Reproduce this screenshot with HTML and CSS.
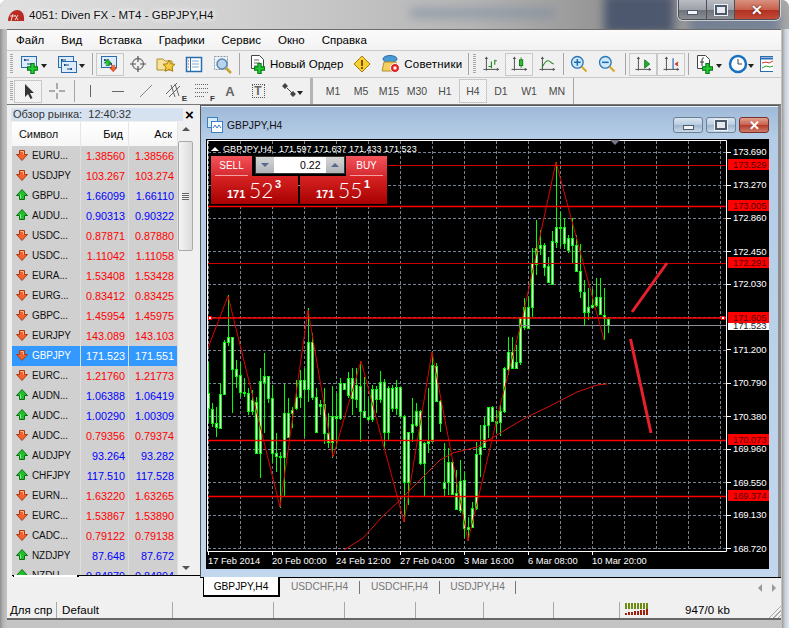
FILE: index.html
```html
<!DOCTYPE html>
<html lang="ru">
<head>
<meta charset="utf-8">
<title>4051: Diven FX - MT4 - GBPJPY,H4</title>
<link rel="stylesheet" href="styles.css">
</head>
<body>
<svg class="defs" width="0" height="0">
  <defs>
    <symbol id="plus" viewBox="0 0 10 10"><path d="M3.500 0.500h3v3h3v3h-3v3h-3v-3h-3v-3h3z" fill="#22d030" stroke="#0a7a18"/></symbol>
    <symbol id="down" viewBox="0 0 12 12"><path d="M3.500 1.500h5v4h3l-5.500 6-5.500-6h3z" fill="#f4612a" stroke="#a83a18"/><path d="M4.500 2.500h3v3" fill="none" stroke="#ffb890"/></symbol>
    <symbol id="up" viewBox="0 0 12 12"><path d="M3.500 10.500h5v-4h3l-5.500-6-5.500 6h3z" fill="#1fc02a" stroke="#0a7016"/><path d="M4.500 9.500v-4" fill="none" stroke="#9cf0a0"/></symbol>
    <symbol id="frame" viewBox="0 0 20 20"><rect x="1.500" y="2.500" width="15" height="11" fill="#dcecfb" stroke="#2a6cb0"/><path d="M4 6h5M12 10H7M4 6l1-1v2zM12 10l-1-1v2z" stroke="#1a4a80" fill="none"/></symbol>
    <symbol id="axes" viewBox="0 0 24 24"><path d="M6.500 4v16M3 18.500h18" fill="none" stroke="#555" stroke-width="1.200"/><path d="M6.500 3l-2 3h4zM22 18.500l-3-2v4z" fill="#555"/></symbol>
    <symbol id="zoom" viewBox="0 0 24 24"><circle cx="10" cy="10" r="7" fill="#cfe8fb" stroke="#2a78b8" stroke-width="1.600"/><path d="M15 15l6 6" stroke="#d8a828" stroke-width="2.500"/></symbol>
  </defs>
</svg>
<div class="window">
  <header class="title">
    <div class="blur blur-a"></div>
    <div class="blur blur-b"></div>
    <div class="blur blur-c"></div>
    <svg class="app-icon" viewBox="0 0 16 12"><path d="M0 11C0 4 5 0 9 0s7 3 7 8v3z" fill="#b92a22"/><path d="M3 11l2-7M2 6h5M7 5l3 5M10 5l-3 5" stroke="#f4d8d0" fill="none"/></svg>
    <span class="title-text">4051: Diven FX - MT4 - GBPJPY,H4</span>
    <div class="win-btns">
      <div class="wb wb-min"><i class="g-min"></i></div>
      <div class="wb wb-max"><i class="g-max"></i></div>
      <div class="wb wb-close"><span>✕</span></div>
    </div>
  </header>

  <nav class="menu">
    <span>Файл</span><span>Вид</span><span>Вставка</span><span>Графики</span><span>Сервис</span><span>Окно</span><span>Справка</span>
  </nav>

  <div class="toolbar tb1">
    <i class="grip"></i>
    <div class="tool w34"><svg class="ic"><use href="#frame"/></svg><svg class="pl"><use href="#plus"/></svg><b class="caret"></b></div>
    <div class="tool w38"><svg class="ic"><use href="#frame"/></svg><svg class="ic second"><use href="#frame"/></svg><b class="caret"></b></div>
    <i class="sep s8"></i>
    <div class="tool on"><svg class="ic"><use href="#frame"/></svg><svg class="mini" viewBox="0 0 12 12"><use href="#up" width="7" height="7"/><use href="#down" x="5" y="5" width="7" height="7"/></svg></div>
    <div class="tool"><svg class="ic" viewBox="0 0 20 20"><circle cx="10" cy="10" r="5.500" fill="none" stroke="#777" stroke-width="1.300"/><path d="M10 2v6M10 12v6M2 10h6M12 10h6" stroke="#555" stroke-width="1.200"/></svg></div>
    <div class="tool"><svg class="ic" viewBox="0 0 20 20"><path d="M1 5h6l2 2h7v9H1z" fill="#f6e29a" stroke="#b09030"/><path d="M13 6l1.800 3.800 4.200.5-3 2.800.8 4.200-3.800-2-3.800 2 .8-4.200-3-2.800 4.200-.5z" fill="#f4cc40" stroke="#a87c10"/></svg></div>
    <div class="tool"><svg class="ic" viewBox="0 0 20 20"><rect x="2.500" y="3.500" width="15" height="14" fill="#fff" stroke="#2a6cb0" stroke-width="1.500"/><path d="M6.500 4v13" stroke="#2a6cb0"/><path d="M8 7h7M8 10h7M8 13h7" stroke="#88a8c8"/><path d="M4 7h1M4 10h1M4 13h1" stroke="#d03020"/></svg></div>
    <div class="tool"><svg class="ic" viewBox="0 0 20 20"><rect x="2.500" y="2.500" width="13" height="13" fill="#eef3f8" stroke="#8a9aa8" stroke-dasharray="2 1"/><circle cx="10" cy="10" r="5" fill="#b8d4ec" stroke="#5a88b0" stroke-width="1.500"/><path d="M14 14l5 5" stroke="#c8a030" stroke-width="2.500"/></svg></div>
    <i class="sep s6"></i>
    <div class="tool text order"><svg class="ic" viewBox="0 0 20 20"><path d="M2.500 1.500h8l4 4v9h-12z" fill="#fff" stroke="#444"/><path d="M5 6h5M5 9h6M5 12h3" stroke="#666"/></svg><svg class="pl"><use href="#plus"/></svg><span>Новый Ордер</span></div>
    <div class="tool"><svg class="ic" viewBox="0 0 20 20"><path d="M10 2l8 8-8 8-8-8z" fill="#f7d030" stroke="#a87c10"/><path d="M10 6v6M10 13v2" stroke="#6a4a00" stroke-width="1.800"/></svg></div>
    <div class="tool text advisor"><svg class="ic" viewBox="0 0 20 20"><ellipse cx="9" cy="5" rx="7" ry="3.500" fill="#4a9ad8" stroke="#2a6ca0"/><path d="M3 8h12l2 9H1z" fill="#f3d060" stroke="#b09030"/><circle cx="14" cy="14" r="4.500" fill="#e02020" stroke="#fff"/><rect x="12.500" y="12.500" width="3" height="3" fill="#fff"/></svg><span>Советники</span></div>
    <i class="sep s4"></i>
    <i class="grip g7"></i>
    <div class="tool"><svg class="ic" viewBox="0 0 24 24"><use href="#axes"/><path d="M12.500 9v8M16.500 7v6M9 15h3M16 8h3" stroke="#1a8a1a" stroke-width="1.300"/></svg></div>
    <div class="tool on"><svg class="ic" viewBox="0 0 24 24"><use href="#axes"/><path d="M14.500 4v13" stroke="#1a8a1a"/><rect x="12.500" y="7" width="4" height="7" fill="#30c030" stroke="#0a6a10"/></svg></div>
    <div class="tool"><svg class="ic" viewBox="0 0 24 24"><use href="#axes"/><path d="M6 16c3-5 4-8 7-8s4 3 7 4" stroke="#1a8a1a" stroke-width="1.300" fill="none"/></svg></div>
    <i class="sep s4"></i>
    <div class="tool"><svg class="ic" viewBox="0 0 24 24"><use href="#zoom"/><path d="M6 10h8M10 6v8" stroke="#1a6ab0" stroke-width="1.800"/></svg></div>
    <div class="tool"><svg class="ic" viewBox="0 0 24 24"><use href="#zoom"/><path d="M6 10h8" stroke="#1a6ab0" stroke-width="1.800"/></svg></div>
    <i class="sep s8"></i>
    <div class="tool on"><svg class="ic" viewBox="0 0 24 24"><use href="#axes"/><path d="M14 7l6 5-6 5z" fill="#20b030" stroke="#0a7016"/></svg></div>
    <div class="tool on"><svg class="ic" viewBox="0 0 24 24"><use href="#axes"/><path d="M14.500 5v13" stroke="#1a5ab0" stroke-width="1.300"/><path d="M17 11l4-2-1 3 1 3-4-2z" fill="#d03020"/></svg></div>
    <i class="sep s6"></i>
    <div class="tool w34"><svg class="ic" viewBox="0 0 20 20"><path d="M2.500 1.500h8l4 4v9h-12z" fill="#fff" stroke="#444"/><path d="M7 12V6c0-2 1-2 2-2M5 8h4" stroke="#333" fill="none"/></svg><svg class="pl"><use href="#plus"/></svg><b class="caret"></b></div>
    <div class="tool w32"><svg class="ic" viewBox="0 0 20 20"><circle cx="10" cy="10" r="8" fill="#fff" stroke="#1a70c0" stroke-width="2.500"/><path d="M10 5v5h4" stroke="#345" fill="none"/></svg><b class="caret"></b></div>
    <div class="tool clip"><svg class="ic" viewBox="0 0 20 20"><rect x="1.500" y="2.500" width="17" height="15" fill="#fff" stroke="#2a6cb0"/><path d="M2 4.500h16" stroke="#2a6cb0" stroke-width="2"/><path d="M3 9l4-1 3 1 4-2 4 1" stroke="#d03020" fill="none"/><path d="M3 14l4-2 4 1 3-1 4 1" stroke="#20a030" fill="none"/></svg></div>
  </div>

  <div class="toolbar tb2">
    <i class="grip g7"></i>
    <div class="tool on"><svg class="ic" viewBox="0 0 20 20"><path d="M7 3v13l3-3 2.500 5 2-1-2.500-5h4z" fill="#333"/></svg></div>
    <div class="tool w30"><svg class="ic" viewBox="0 0 20 20"><path d="M10 2v6M10 12v6M2 10h6M12 10h6" stroke="#666"/></svg></div>
    <i class="sep s4"></i>
    <div class="tool"><svg class="ic" viewBox="0 0 20 20"><path d="M10.500 4v12" stroke="#666"/></svg></div>
    <div class="tool"><svg class="ic" viewBox="0 0 20 20"><path d="M4 10.500h12" stroke="#666"/></svg></div>
    <div class="tool"><svg class="ic" viewBox="0 0 20 20"><path d="M4 16L16 4" stroke="#888"/></svg></div>
    <div class="tool lettered"><svg class="ic" viewBox="0 0 20 20"><path d="M2 13L13 2M5 16L16 5M7 4l4 12M11 3l4 12" stroke="#666" fill="none"/></svg><small>E</small></div>
    <div class="tool lettered"><svg class="ic" viewBox="0 0 20 20"><path d="M3 3.500h14M3 7.500h14M3 11.500h14M3 15.500h10" stroke="#666" stroke-dasharray="1 1"/></svg><small>F</small></div>
    <div class="tool glyph-a">A</div>
    <div class="tool glyph-t"><span>T</span></div>
    <div class="tool w34b"><svg class="ic" viewBox="0 0 20 20"><path d="M5 2l3 3-3 3-3-3zM13 10l3 3-3 3-3-3z" fill="#444"/><path d="M7 7l5 5" stroke="#444"/></svg><b class="caret"></b></div>
    <i class="sep thick"></i>
    <div class="tf">M1</div><div class="tf">M5</div><div class="tf">M15</div><div class="tf">M30</div><div class="tf">H1</div><div class="tf on">H4</div><div class="tf">D1</div><div class="tf">W1</div><div class="tf">MN</div>
    <i class="sep end"></i>
  </div>

  <main class="main">
    <aside class="watch">
      <div class="watch-head"><span>Обзор рынка:&nbsp; 12:40:32</span></div>
      <b class="watch-close">×</b>
      <div class="watch-body">
        <div class="watch-table">
          <div class="row th"><span class="c-sym">Символ</span><span class="c-num">Бид</span><span class="c-num">Аск</span></div>
          <div class="rows">
            <div class="row dn"><svg class="ar"><use href="#down"/></svg><span class="c-sym">EURU...</span><span class="c-num">1.38560</span><span class="c-num">1.38566</span></div>
            <div class="row dn"><svg class="ar"><use href="#down"/></svg><span class="c-sym">USDJPY</span><span class="c-num">103.267</span><span class="c-num">103.274</span></div>
            <div class="row up"><svg class="ar"><use href="#up"/></svg><span class="c-sym">GBPU...</span><span class="c-num">1.66099</span><span class="c-num">1.66110</span></div>
            <div class="row up"><svg class="ar"><use href="#up"/></svg><span class="c-sym">AUDU...</span><span class="c-num">0.90313</span><span class="c-num">0.90322</span></div>
            <div class="row dn"><svg class="ar"><use href="#down"/></svg><span class="c-sym">USDC...</span><span class="c-num">0.87871</span><span class="c-num">0.87880</span></div>
            <div class="row dn"><svg class="ar"><use href="#down"/></svg><span class="c-sym">USDC...</span><span class="c-num">1.11042</span><span class="c-num">1.11058</span></div>
            <div class="row dn"><svg class="ar"><use href="#down"/></svg><span class="c-sym">EURA...</span><span class="c-num">1.53408</span><span class="c-num">1.53428</span></div>
            <div class="row dn"><svg class="ar"><use href="#down"/></svg><span class="c-sym">EURG...</span><span class="c-num">0.83412</span><span class="c-num">0.83425</span></div>
            <div class="row dn"><svg class="ar"><use href="#down"/></svg><span class="c-sym">GBPC...</span><span class="c-num">1.45954</span><span class="c-num">1.45975</span></div>
            <div class="row dn"><svg class="ar"><use href="#down"/></svg><span class="c-sym">EURJPY</span><span class="c-num">143.089</span><span class="c-num">143.103</span></div>
            <div class="row sel"><svg class="ar"><use href="#down"/></svg><span class="c-sym">GBPJPY</span><span class="c-num">171.523</span><span class="c-num">171.551</span></div>
            <div class="row dn"><svg class="ar"><use href="#down"/></svg><span class="c-sym">EURC...</span><span class="c-num">1.21760</span><span class="c-num">1.21773</span></div>
            <div class="row up"><svg class="ar"><use href="#up"/></svg><span class="c-sym">AUDN...</span><span class="c-num">1.06388</span><span class="c-num">1.06419</span></div>
            <div class="row up"><svg class="ar"><use href="#up"/></svg><span class="c-sym">AUDC...</span><span class="c-num">1.00290</span><span class="c-num">1.00309</span></div>
            <div class="row dn"><svg class="ar"><use href="#down"/></svg><span class="c-sym">AUDC...</span><span class="c-num">0.79356</span><span class="c-num">0.79374</span></div>
            <div class="row up"><svg class="ar"><use href="#up"/></svg><span class="c-sym">AUDJPY</span><span class="c-num">93.264</span><span class="c-num">93.282</span></div>
            <div class="row up"><svg class="ar"><use href="#up"/></svg><span class="c-sym">CHFJPY</span><span class="c-num">117.510</span><span class="c-num">117.528</span></div>
            <div class="row dn"><svg class="ar"><use href="#down"/></svg><span class="c-sym">EURN...</span><span class="c-num">1.63220</span><span class="c-num">1.63265</span></div>
            <div class="row dn"><svg class="ar"><use href="#down"/></svg><span class="c-sym">EURC...</span><span class="c-num">1.53867</span><span class="c-num">1.53890</span></div>
            <div class="row dn"><svg class="ar"><use href="#down"/></svg><span class="c-sym">CADC...</span><span class="c-num">0.79122</span><span class="c-num">0.79138</span></div>
            <div class="row up"><svg class="ar"><use href="#up"/></svg><span class="c-sym">NZDJPY</span><span class="c-num">87.648</span><span class="c-num">87.672</span></div>
            <div class="row up"><svg class="ar"><use href="#up"/></svg><span class="c-sym">NZDU...</span><span class="c-num">0.84879</span><span class="c-num">0.84894</span></div>
          </div>
        </div>
        <div class="scroll">
          <b class="sc-up"></b>
          <div class="thumb"><i></i></div>
          <b class="sc-down"></b>
        </div>
      </div>
      <div class="tabs watch-tabs">
        <span class="tab active">Символы</span><span class="tab last">Тиковый график</span>
      </div>
    </aside>

    <section class="mdi">
      <div class="child">
        <div class="child-head">
          <svg class="child-icon" viewBox="0 0 16 16"><rect x="0.500" y="0.500" width="10" height="10" fill="#d8eafa" stroke="#3a80c0"/><rect x="4.500" y="4.500" width="11" height="11" fill="#fff" stroke="#3a80c0"/><path d="M6 11l2-3 2 3 2-3 2 3" stroke="#3a80c0" fill="none"/></svg>
          <span class="child-title">GBPJPY,H4</span>
          <div class="child-btns">
            <div class="cb"><i class="g-min"></i></div>
            <div class="cb"><i class="g-max"></i></div>
            <div class="cb cb-close"><span>✕</span></div>
          </div>
        </div>
        <div class="chart-wrap">
          <svg id="chart" class="chart" viewBox="206 139 563 430" width="563" height="430"></svg>
          <div class="trade">
            <div class="trade-top">
              <div class="side">SELL</div>
              <div class="spin"><b class="sp sp-d"></b><span class="lot">0.22</span><b class="sp sp-u"></b></div>
              <div class="side">BUY</div>
            </div>
            <div class="trade-bot">
              <div class="quote"><small>171</small><strong>52</strong><sup>3</sup></div>
              <div class="quote"><small>171</small><strong>55</strong><sup>1</sup></div>
            </div>
          </div>
        </div>
      </div>
    </section>
  </main>

  <div class="lower">
    <div class="tabs chart-tabs">
      <span class="tab active">GBPJPY,H4</span><span class="tab">USDCHF,H4</span><span class="tab">USDCHF,H4</span><span class="tab">USDJPY,H4</span>
      <span class="tab-arrows"><b class="ta-l"></b><b class="ta-r"></b></span>
    </div>
  </div>

  <footer class="status">
    <span class="st st1">Для спр</span>
    <span class="st st2">Default</span>
    <span class="st st3"></span><span class="st st4"></span><span class="st st5"></span><span class="st st6"></span><span class="st st7"></span><span class="st st8"></span>
    <span class="st st9"><svg class="conn" viewBox="0 0 24 12"><path d="M1 0v6M4 0v6M7 0v6M10 0v6M13 0v6M16 0v6M19 0v6M22 0v6" stroke="#6f8a10" stroke-width="2"/><path d="M1 10v2M4 9v3M7 9v3M10 8v4M13 8v4M16 7v5M19 7v5M22 6v6" stroke="#a02010" stroke-width="2"/></svg><em>947/0 kb</em></span>
    <i class="resize"></i>
  </footer>
</div>
<script src="chart.js"></script>
</body>
</html>
```

FILE: styles.css
```css
* { box-sizing: border-box; }
html, body { margin: 0; height: 100%; overflow: hidden; background: #fff; }
body { font: 11px "Liberation Sans", Arial, sans-serif; color: #000; }
.defs { position: absolute; }
i, b { display: block; }

.window {
  width: 789px; height: 628px; padding: 0 8px 8px 7px;
  display: flex; flex-direction: column;
  background: linear-gradient(90deg, #8e8e8e 0, #b4b4b4 3px, #c4c4c4 7px);
  border-radius: 7px 7px 0 0;
  position: relative; overflow: hidden;
}
.window::after {
  content: ""; position: absolute; right: 0; top: 29px; bottom: 0; width: 7px;
  background: linear-gradient(90deg, #9a9a9a, #c6ccd4 40%, #dfe6ee);
}

/* title bar */
.title {
  height: 29px; margin: 0 -8px 0 -7px; padding-left: 8px;
  position: relative; overflow: hidden; flex: none;
  display: flex; align-items: center; gap: 5px;
  background: linear-gradient(90deg, #e0e0e0 0, #d0d0d0 30%, #b4b4b4 60%, #8e8e8e 80%, #a8a8a8 100%);
}
.blur { position: absolute; filter: blur(5px); }
.blur-a { left: 410px; top: 8px; width: 145px; height: 10px; background: #7c8ba0; opacity: .55; }
.blur-b { left: 604px; top: -6px; width: 70px; height: 40px; background: #3d4a66; opacity: .8; }
.blur-c { left: 690px; top: 10px; width: 90px; height: 26px; background: #5c6f90; opacity: .6; }
.app-icon { width: 16px; height: 12px; position: relative; top: 1px; }
.title-text { position: relative; font-size: 11.500px; color: #111; text-shadow: 0 0 6px #fff, 0 0 6px #fff; }
.win-btns {
  position: absolute; right: 9px; top: 0; display: flex; height: 20px;
  border: 1px solid #4a4f58; border-top: 0; border-radius: 0 0 5px 5px; overflow: hidden;
  box-shadow: 0 0 0 1px rgba(255,255,255,.6);
}
.wb { display: flex; align-items: center; justify-content: center; background: linear-gradient(#b9bcc2, #9ea2a8 50%, #6d7178 52%, #8a8e94); border-right: 1px solid #4a4f58; }
.wb-min { width: 28px; }
.wb-max { width: 28px; }
.wb-close { width: 44px; border-right: 0; background: linear-gradient(#d9917f, #c8614c 50%, #b03020 52%, #c44a38); color: #fff; font-size: 14px; font-weight: bold; text-shadow: 0 0 2px #400; }
.g-min { width: 11px; height: 5px; margin-top: 5px; background: #f2f4f6; border: 1px solid #4c5a6c; }
.g-max { width: 12px; height: 10px; background: #e6eaee; border: 2px solid #4c5a6c; box-shadow: inset 0 0 0 2px #e6eaee; outline: 1px solid #eef2f6; }

/* menu */
.menu { height: 21px; flex: none; padding-left: 9px; display: flex; align-items: center; gap: 17px; background: linear-gradient(#fbfbfb, #f2f2f2); font-size: 11.500px; border-top: 1px solid #6c6c6c; }

/* toolbars */
.toolbar { display: flex; align-items: center; background: #f0f0f0; border-top: 1px solid #c9c9c9; flex: none; }
.tb1 { height: 27px; }
.tb2 { height: 28px; border-bottom: 1px solid #777; }
.grip { width: 9px; height: 20px; flex: none; background: repeating-linear-gradient(#a8a8a8 0 1px, transparent 1px 2px) 3px 0 / 3px 100% no-repeat; }
.g7 { width: 7px; }
.sep { flex: none; height: 22px; position: relative; }
.sep::before { content: ""; position: absolute; left: 50%; top: 0; bottom: 0; width: 1px; background: #a6a6a6; }
.s4 { width: 4px; } .s6 { width: 6px; } .s8 { width: 8px; }
.thick { width: 11px; height: 26px; margin-left: 1px; }
.thick::before { width: 3px; background: #b4b4b4; left: 3px; }
.end { width: 4px; height: 26px; }
.tool { flex: none; width: 28px; height: 23px; display: flex; align-items: center; justify-content: center; position: relative; }
.tool.on, .tf.on { background: repeating-conic-gradient(#f8f8f8 0 25%, #ececec 0 50%) 0 0 / 2px 2px; box-shadow: inset 0 0 0 1px #c8c8c8; }
.w30 { width: 30px; }
.w32 { width: 32px; } .w34 { width: 34px; justify-content: flex-start; padding-left: 4px; } .w34b { width: 34px; justify-content: flex-start; padding-left: 8px; } .w38 { width: 38px; justify-content: flex-start; padding-left: 7px; }
.w32:has(.caret) { justify-content: flex-start; padding-left: 3px; }
.ic { width: 20px; height: 20px; flex: none; }
.second { position: absolute; left: 10px; top: 6px; }
.pl { position: absolute; width: 11px; height: 11px; left: 11px; top: 10px; }
.mini { position: absolute; width: 13px; height: 13px; left: 8px; top: 6px; }
.caret { position: absolute; right: 3px; top: 11px; border: 3.500px solid transparent; border-top: 4px solid #222; border-bottom: 0; }
.text { width: auto; padding: 0 5px 0 7px; font-size: 11.500px; justify-content: flex-start; }
.order { gap: 1px; }
.order .pl { left: 12px; top: 10px; }
.advisor { gap: 3px; padding: 0 4px 0 5px; letter-spacing: .2px; }
.clip { width: 16px; overflow: hidden; justify-content: flex-start; padding-left: 2px; }
.lettered small { position: absolute; right: 1px; bottom: 0; font-size: 8px; font-weight: bold; color: #333; }
.glyph-a { font-size: 13px; font-weight: bold; color: #666; }
.glyph-t span { display: block; width: 13px; height: 14px; text-align: center; line-height: 13px; font-size: 12px; font-weight: bold; color: #666; border: 1px dotted #555; }
.tf { flex: none; width: 28px; height: 24px; display: flex; align-items: center; justify-content: center; font-size: 10.500px; color: #4a4a4a; }
.thick + .tf { margin-left: 1px; }

/* main */
.main { flex: none; height: 472px; display: flex; position: relative; }
.watch { width: 193px; flex: none; position: relative; background: #f0f0f0; padding: 3px 0 0 4px; display: flex; flex-direction: column; }
.watch-head { height: 13px; width: 172px; flex: none; background: #d6e2f0; color: #333; font-size: 11px; line-height: 12px; padding-left: 2px; }
.watch-close { position: absolute; left: 178px; top: 0; font-size: 15px; line-height: 19px; }
.watch-body { flex: none; height: 453px; display: flex; margin: 1px 0 0 1px; }
.watch-table { width: 166px; overflow: hidden; flex: none; }
.row { height: 20px; display: grid; grid-template-columns: 69px 48px 49px; align-items: center; position: relative; background: #d0d0d0; }
.row span { display: block; height: 100%; line-height: 20px; border-right: 1px solid #dedede; border-bottom: 1px solid #dedede; }
.c-sym { padding-left: 20px; color: #111; white-space: nowrap; font-size: 10px; letter-spacing: -.1px; }
.c-num { text-align: right; padding-right: 3px; font-size: 10.800px; }
.dn .c-num { color: #f00; }
.up .c-num { color: #00f; }
.sel { background: #3399ff; }
.sel span { color: #fff; }
.ar { position: absolute; left: 4px; top: 3px; width: 12px; height: 12px; }
.th { height: 24px; background: linear-gradient(#fff, #f6f6f6); }
.th span { line-height: 24px; border-right-color: #e6e6e6; border-bottom: 1px solid #d8d8d8; font-size: 11px; }
.th .c-sym { padding-left: 7px; }
.th .c-num { padding-right: 5px; }
.scroll { width: 17px; flex: none; position: relative; background: #f0f0f0; }
.sc-up, .sc-down { position: absolute; left: 4px; border: 4px solid transparent; }
.sc-up { top: 5px; border-bottom: 4px solid #555; border-top: 0; }
.sc-down { bottom: 5px; border-top: 4px solid #555; border-bottom: 0; }
.thumb { position: absolute; top: 19px; left: 0; width: 15px; height: 110px; border: 1px solid #aaa; border-radius: 2px; background: linear-gradient(90deg, #f4f4f4, #dcdcdc); display: flex; align-items: center; justify-content: center; }
.thumb i { width: 7px; height: 7px; background: repeating-linear-gradient(#666 0 1px, #eee 1px 2px); }

.tabs { display: flex; align-items: flex-start; position: relative; background: #f0f0f0; }
.tabs::before { content: ""; position: absolute; left: 0; right: 0; top: 0; height: 1px; background: #000; }
.tab { display: block; position: relative; color: #777; text-align: center; border-right: 1px solid #777; height: 13px; line-height: 12px; }
.tab.active { color: #111; background: #fff; margin-top: 0; height: 20px; padding-top: 4px; border: 1px solid #000; border-top: 0; border-width: 0 2px 2px 1px; }
.watch-tabs { margin-left: 1px; height: 21px; }
.watch-tabs .tab.active { width: 66px; margin-left: 1px; font-size: 11px; }
.watch-tabs .tab.last { width: 105px; margin-top: 5px; font-size: 11px; letter-spacing: .1px; }

/* MDI area */
.mdi { flex: 1; min-width: 0; background: #9fb9d6; border-left: 1px solid #555; border-top: 1px solid #5a5a5a; border-right: 3px solid #8d8d8d; }
.child { height: 471px; padding-left: 5px; background: linear-gradient(#9fbad8 0, #b4cce6 30px, #c2d7ee 100%); border-top: 1px solid #e8f0f8; }
.child-head { height: 32px; display: flex; align-items: center; position: relative; padding: 4px 0 0 1px; }
.child-icon { width: 16px; height: 16px; margin-right: 4px; }
.child-title { font-size: 10.300px; color: #111; }
.child-btns { position: absolute; right: 9px; top: 10px; display: flex; gap: 3px; }
.cb { width: 30px; height: 16px; border: 1px solid #6f7f92; border-radius: 3px; display: flex; align-items: center; justify-content: center; background: linear-gradient(#dae6f2, #b8cbe0 50%, #a0b6d0 52%, #c6d8ea); }
.cb-close { border-color: #7a3028; background: linear-gradient(#e2a090, #c8604e 50%, #b03c2c 52%, #cf7a68); color: #fff; font-size: 13px; font-weight: bold; }
.chart-wrap { position: relative; width: 563px; height: 430px; }
.chart { display: block; background: #000; font-family: "Liberation Sans", Arial, sans-serif; }
.px { font-size: 9.600px; letter-spacing: -.2px; }

/* one click trading */
.trade { position: absolute; left: 5px; top: 17px; width: 176px; color: #fff; }
.trade-top { display: flex; height: 20px; justify-content: space-between; align-items: flex-start; }
.side { width: 41px; height: 20px; padding-top: 4px; text-align: center; font-size: 10px; background: linear-gradient(#f4525a, #d42a30); position: relative; }
.side::after { content: ""; position: absolute; left: 4px; right: 4px; bottom: 0; height: 1px; background: #f5a0a0; }
.spin { width: 90px; height: 18px; margin-left: 1px; border: 1px solid #333; background: #fff; display: flex; color: #000; }
.sp { width: 18px; background: linear-gradient(#d6d6d6, #b0b4b8); position: relative; }
.sp::after { content: ""; position: absolute; left: 5px; top: 6px; border: 4px solid transparent; }
.sp-d::after { border-top: 4px solid #556a8c; border-bottom: 0; }
.sp-u::after { border-bottom: 4px solid #556a8c; border-top: 0; }
.lot { flex: 1; text-align: right; padding-right: 5px; line-height: 16px; font-size: 10.500px; }
.trade-bot { display: flex; justify-content: space-between; }
.quote { width: 87px; height: 28px; position: relative; background: linear-gradient(#d82424, #a80000); }
.quote small { position: absolute; left: 16px; top: 12px; font-size: 11px; font-weight: bold; }
.quote strong { position: absolute; left: 38px; top: 0; font: 300 21px/28px Lato, "Liberation Sans", sans-serif; }
.quote sup { position: absolute; left: 64px; top: 2px; font-size: 11px; line-height: 12px; font-weight: bold; }

/* bottom */
.lower { height: 21px; flex: none; background: #f0f0f0; margin-left: 193px; position: relative; }
.lower::before { content: ""; position: absolute; left: -193px; width: 193px; top: 0; bottom: 0; background: #f0f0f0; }
.chart-tabs { height: 21px; padding-left: 3px; }
.chart-tabs .tab { width: 80px; margin-top: 4px; height: 13px; font-size: 10.200px; }
.chart-tabs .tab.active { width: 77px; margin-top: 0; height: 20px; color: #000; }
.chart-tabs .tab:nth-child(4) { width: 76px; }
.tab-arrows { position: absolute; right: 5px; top: 7px; display: flex; gap: 10px; }
.tab-arrows b { border: 4px solid transparent; width: 0; }
.tab-arrows .ta-l { border-right: 4px solid #999; border-left: 0; }
.tab-arrows .ta-r { border-left: 4px solid #999; border-right: 0; }

.status { flex: 1; display: flex; align-items: stretch; background: #f0f0f0; padding-top: 4px; border-bottom: 2px solid #666; position: relative; font-size: 11.500px; }
.st { display: flex; align-items: center; border-right: 1px solid #a8a8a8; flex: none; }
.st1 { width: 50px; padding-left: 3px; }
.st2 { width: 116px; padding-left: 5px; letter-spacing: .1px; }
.st3 { width: 101px; } .st4 { width: 71px; } .st5 { width: 71px; } .st6 { width: 68px; } .st7 { width: 70px; } .st8 { width: 66px; }
.st9 { border: 0; padding-left: 5px; flex: 1; }
.conn { width: 24px; height: 12px; margin-top: -2px; }
.st9 em { font-style: normal; margin-left: 36px; letter-spacing: .1px; }
.resize { position: absolute; right: 0; bottom: 0; width: 14px; height: 14px; background: repeating-linear-gradient(135deg, transparent 0 2px, #aaa 2px 3px); clip-path: polygon(100% 0, 100% 100%, 0 100%); }
```

FILE: chart.js
```js
// GBPJPY,H4 chart drawn from traced bars. x/y are read in 3x units from an origin.
const NS = 'http://www.w3.org/2000/svg';
const svg = document.getElementById('chart');

function add(tag, attrs, text) {
  const el = document.createElementNS(NS, tag);
  for (const k in attrs) el.setAttribute(k, attrs[k]);
  if (text) el.textContent = text;
  svg.appendChild(el);
  return el;
}

// [hi, top, bottom, lo]
const groups = [
  { ox: 200, oy: 300, x0: 26, rows: [
    [185,280,325,370],[310,328,370,382],[320,370,380,410],[250,283,383,383],[120,127,283,283],[-15,112,127,137],
    [110,112,208,340],[180,208,228,265],[190,226,277,290],[235,277,278,290],[265,280,332,345],[270,300,333,345],
    [290,305,458,460],[205,243,458,535],[160,228,245,400],[228,229,295,310],[255,295,460,490],[400,460,467,515],
    [455,468,472,625],[252,340,472,590],[295,338,412,415],[320,330,338,385],[240,292,325,330],[210,240,292,325],
    [205,240,268,412],[25,127,268,305],[100,127,290,300],[265,290,395,395],[300,313,317,345],[265,313,400,432],
    [340,400,425,445],[258,348,425,475],[280,348,355,445],[235,250,355,360],[250,250,268,270],[215,235,285,295],
    [205,235,295,345],[205,255,298,325],[182,257,333,425],[230,333,350,355],[295,350,358,362],[255,268,358,365],
    [258,268,298,340],[212,247,297,310],[238,247,395,450],[258,265,395,420],[255,265,323,335],[240,262,323,345],
    [260,262,348,350],[345,348,545,665],[395,397,545,615],[295,373,397,425],[310,333,375,380],[330,333,490,495],
    [425,428,490,590],[265,423,428,460],[155,195,423,425],[190,198,303,305],[300,303,370,395],[428,545,565,590],
    [445,485,545,585],[480,485,582,585],[510,580,628,630],[480,542,630,640],[515,540,685,715],[650,680,687,722],
    [605,625,680,680],[425,462,625,630],[375,440,462,530],[350,375,440,445],[320,322,375,415],[318,322,362,365],[330,362,368,400]
  ]},
  { ox: 490, oy: 340, x0: 32, rows: [
    [195,213,247,288],[80,85,213,220],[-10,37,87,105],[-10,37,83,85],[15,65,83,85]
  ]},
  { ox: 460, oy: 110, x0: 182, rows: [
    [620,625,755,765],[565,590,650,660],[560,590,655,655],[415,460,590,620],[330,415,462,495],[360,405,415,435],
    [400,405,470,497],[440,468,515,520],[362,393,523,525],[155,352,395,413],[305,350,352,410],[325,350,400,418],
    [375,385,420,430],[325,385,405,460],[375,405,482,485],[403,482,542,565],[510,547,607,645],[535,590,607,630],
    [538,585,590,592],[505,560,585,590],[505,560,613,615],[535,615,625,690],[620,628,645,670]
  ]}
];

// grid
for (let y = 152; y <= 548; y += 33) add('line', { x1: 208, x2: 727, y1: y + .5, y2: y + .5, stroke: '#76828f', 'stroke-dasharray': '3 2' });
for (let x = 208; x <= 720; x += 32) add('line', { x1: x + .5, x2: x + .5, y1: 141, y2: 551, stroke: '#76828f', 'stroke-dasharray': '3 2' });

// candles
for (const g of groups) {
  g.rows.forEach((r, i) => {
    const x = Math.floor(g.ox + (g.x0 + i * 12) / 3);
    const [hi, top, bot, lo] = r.map(v => Math.round(g.oy + v / 3));
    add('rect', { x, y: hi, width: 1, height: Math.max(lo - hi, 1), fill: '#00ff00' });
    const h = Math.max(bot - top, 1);
    add('rect', { x: x - 1, y: top, width: 3, height: h + 1, fill: '#00ff00' });
    if (h > 1) add('rect', { x, y: top + 1, width: 1, height: h - 1, fill: '#ffffff' });
  });
}

// horizontal levels
add('line', { x1: 208, x2: 727, y1: 325.5, y2: 325.5, stroke: '#8c8c96' });
add('line', { x1: 388, x2: 727, y1: 165.5, y2: 165.5, stroke: '#d00000' });
add('line', { x1: 208, x2: 727, y1: 263.5, y2: 263.5, stroke: '#d00000' });
[206.5, 318, 440.5, 496.5].forEach(y => {
  add('line', { x1: 208, x2: 727, y1: y, y2: y, stroke: '#ff0000', 'stroke-width': 1.300 });
});

// zigzag and moving average
add('polyline', { fill: 'none', stroke: '#e00000', points: '208,348 228,296 280,507 308,310 333,457 361,361 404,522 432,352 468,541 500,406 522,320 556,162 604,340' });
add('polyline', { fill: 'none', stroke: '#d81010', points: '344,550 363,538 382,517 400,500 420,480 440,460 453,453 477,447 497,435 510,427 527,417 550,406 577,392 597,385 607,384' });

// hand-drawn strokes
add('line', { x1: 632, y1: 312, x2: 667, y2: 263, stroke: '#e8202c', 'stroke-width': 3 });
add('line', { x1: 630.500, y1: 339, x2: 651, y2: 433, stroke: '#e8202c', 'stroke-width': 3 });

// frame, ticks and handles
add('path', { d: 'M207.500 140.500H726.500V551.500H207.500Z', fill: 'none', stroke: '#fff' });
add('path', { d: 'M610 140h10l-5 5z', fill: '#778' });
for (const [x, y] of [[208, 316], [721, 316]]) add('rect', { x: x + .5, y: y + .5, width: 3, height: 3, fill: '#fff', stroke: '#f00' });

// symbol caption
add('path', { d: 'M211 151l4-4 4 4z', fill: '#fff' });
add('text', { x: 223, y: 151.500, fill: '#fff', 'font-size': 9.100 }, 'GBPJPY,H4');
add('text', { x: 279, y: 151.500, fill: '#fff', 'font-size': 9 }, '171.597 171.637 171.433 171.523');

// price axis
[['173.690', 155], ['173.270', 188], ['172.860', 221], ['172.450', 254.500], ['172.030', 287], ['171.200', 352.500], ['170.790', 386], ['170.380', 419.500], ['169.960', 452], ['169.550', 485.500], ['169.130', 518], ['168.720', 551.500]].forEach(([t, y]) => {
  add('rect', { x: 727, y: Math.round(y - 3.500), width: 4, height: 1, fill: '#fff' });
  add('text', { x: 733, y, fill: '#fff', class: 'px' }, t);
});
add('rect', { x: 728, y: 323, width: 41, height: 7, fill: '#fff' });
add('text', { x: 733, y: 329, fill: '#222', class: 'px' }, '171.523');
[['173.529', 159], ['173.005', 200], ['172.291', 257], ['171.605', 312], ['170.073', 434], ['169.374', 490]].forEach(([t, y]) => {
  add('rect', { x: 728, y, width: 41, height: 11, fill: '#ff0000' });
  add('text', { x: 733, y: y + 9, fill: '#5a0000', class: 'px' }, t);
});

// time axis
[['17 Feb 2014', 208], ['20 Feb 00:00', 272], ['24 Feb 12:00', 336], ['27 Feb 04:00', 400], ['3 Mar 16:00', 464], ['6 Mar 08:00', 528], ['10 Mar 20:00', 592]].forEach(([t, x]) => {
  add('rect', { x, y: 551, width: 1, height: 4, fill: '#fff' });
  add('text', { x, y: 564, fill: '#fff', 'font-size': 9.300 }, t);
});
```
